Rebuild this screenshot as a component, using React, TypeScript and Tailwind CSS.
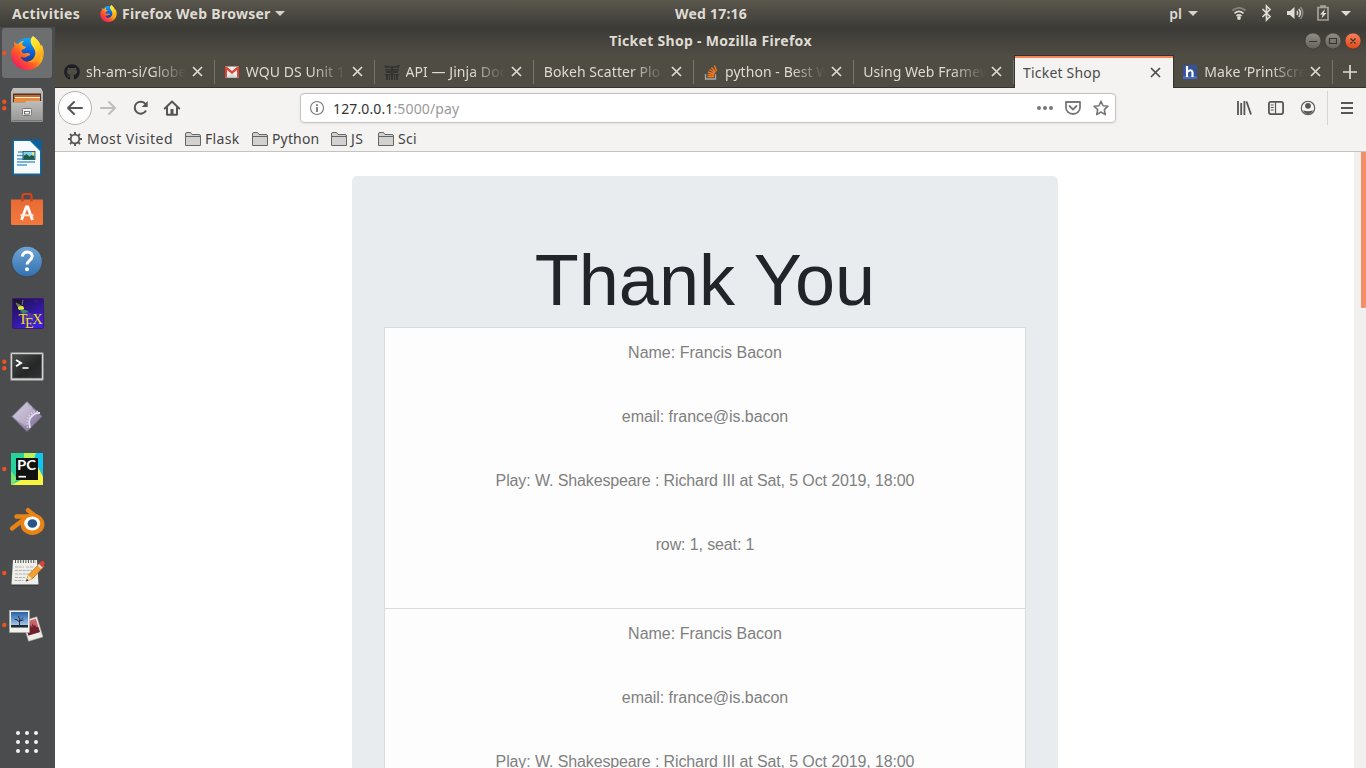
import type { ReactNode } from "react";
import { FaGithub } from "react-icons/fa";

const ui = "font-['Noto_Sans','Open_Sans',sans-serif]";

function FirefoxMark({ id }: { id: string }) {
  return (
    <g>
      <defs>
        <linearGradient id={id + "a"} x1="1" y1="0" x2="0.1" y2="0.9">
          <stop offset="0.1" stopColor="#fff24a" />
          <stop offset="0.4" stopColor="#ffb31a" />
          <stop offset="0.65" stopColor="#ff5a26" />
          <stop offset="1" stopColor="#f01468" />
        </linearGradient>
        <linearGradient id={id + "b"} x1="0.5" y1="0" x2="0.4" y2="1">
          <stop offset="0" stopColor="#11a9f5" />
          <stop offset="0.5" stopColor="#0b5fd8" />
          <stop offset="1" stopColor="#2b2a7f" />
        </linearGradient>
        <linearGradient id={id + "c"} x1="0.3" y1="0" x2="0.6" y2="1">
          <stop offset="0" stopColor="#fff44f" />
          <stop offset="0.5" stopColor="#ffd21f" />
          <stop offset="1" stopColor="#ff8a16" />
        </linearGradient>
      </defs>
      <circle cx="16.5" cy="15.5" r="13.5" fill={"url(#" + id + "b)"} />
      <path
        d="M3.6 5.3c-.2 2 0 3.5.5 4.6C1.200 12.500 0 16 .7 20.500 2 28.500 8.500 34 17 34c9 0 15.800-6.500 16-15.500.1-4-1-7.500-3-10 .6 3 .3 5.500-.5 7.500-2 6.500-6 10-11.500 9.800-4 0-7-2.200-7.700-5 2.500 1.400 5 .6 6.500-.6 1.200-.9 2.500-.5 2.800-1.200.4-.8-1-2.300-3.300-1.900-1.700.4-3.200.9-4.600-.6-.8-.9-.7-2 0-2.700 1.800-.8 3.800-1.600 3.700-3.100-1.400-.4-3-.8-3.700-1.700-.3-1.500.6-3 2-4.200-3 .3-4.800 1.500-6 3.200-1.600-.2-3.200-.8-4.100-2.700z"
        fill={"url(#" + id + "a)"}
      />
      <path
        d="M22.500 0c-2.500 2.300-3 5-1.700 8 1.600 3.400 4.300 5.200 4 9.500-.3 4.300-3.300 7.600-7.800 8.200 6.500 1.700 12-1 14-7.500.8 2.200.7 4.800-.2 7.200 2.600-4.800 3.200-12 .4-17-.3 1-.5 1.600-.8 2-1-4.400-4-7.700-7.900-10.400z"
        fill={"url(#" + id + "c)"}
      />
    </g>
  );
}

const dockItems: { name: string; dots: number; art: ReactNode }[] = [
  {
    name: "Firefox",
    dots: 1,
    art: (
      <>
        <rect x="2" y="1" width="50" height="50" rx="3" fill="#6d6e70" />
        <g transform="translate(10.500 9)">
          <FirefoxMark id="ffdock" />
        </g>
      </>
    ),
  },
  {
    name: "Files",
    dots: 2,
    art: (
      <>
        <path d="M13 9h28l2 4v28.500a1.500 1.500 0 0 1-1.500 1.500h-29a1.500 1.500 0 0 1-1.500-1.500V13z" fill="url(#fileTop)" />
        <rect x="13" y="14.500" width="28" height="9" fill="#4c342a" />
        <rect x="14" y="16" width="26" height="3" fill="#c96a2c" />
        <rect x="15" y="18" width="25" height="1.500" fill="#fff0cf" />
        <rect x="14" y="19.500" width="26" height="4" fill="#ef8a38" />
        <path d="M12 23.500h13l1.500-1.500H42v20H12z" fill="url(#fileFront)" />
        <path d="M12 41.500h30" stroke="#777" />
        <rect x="22.500" y="29.500" width="9" height="7" rx="1" fill="#eee" stroke="#777" />
        <rect x="24.500" y="32.500" width="5" height="2.500" fill="#fff" stroke="#555" strokeWidth=".8" />
      </>
    ),
  },
  {
    name: "Writer",
    dots: 0,
    art: (
      <>
        <path d="M12.500 8.500h20l9 9.500v26h-29z" fill="#0d69a5" />
        <path d="M14 10h16l10 10v22.500H14z" fill="#f7f9fa" />
        <path d="M31 8.500h10.500V19z" fill="#0f5f9b" />
        <path d="M18 21h5M17 24.500h6M17 28h18M17 31h18M17 34h10" stroke="#4b9ed0" strokeWidth="1.700" />
        <rect x="23" y="20.500" width="12" height="8" fill="#7fd0f0" stroke="#18486b" strokeWidth=".8" />
        <path d="M23.500 28v-3l3-2 3 2.500 2-1.500 3 1.500V28z" fill="#205e38" />
        <circle cx="33" cy="22.500" r="1.200" fill="#ffe64d" />
      </>
    ),
  },
  {
    name: "Software",
    dots: 0,
    art: (
      <>
        <path d="M22.500 19v-6q0-2 2-2h5q2 0 2 2v6" fill="none" stroke="#d8451d" strokeWidth="2" />
        <path d="M11 16.500h32v24a1.500 1.500 0 0 1-1.500 1.500h-29a1.500 1.500 0 0 1-1.500-1.500z" fill="url(#bag)" />
        <path d="M22.500 14v4.500M31.500 14v4.500" stroke="#c9401b" strokeWidth="2.200" />
        <path d="M21.500 37 26.300 24h1.400l4.800 13" fill="none" stroke="#fff" strokeWidth="2.800" />
        <path d="M20.500 32.300h13" stroke="#fbe6dc" strokeWidth="2" />
      </>
    ),
  },
  {
    name: "Help",
    dots: 0,
    art: (
      <>
        <circle cx="27" cy="27.300" r="15.200" fill="#36475a" opacity=".5" />
        <circle cx="27" cy="26.500" r="14.800" fill="url(#help)" />
        <path d="M22.300 21.500c.5-3.200 2.500-4.500 5-4.500 3 0 4.900 1.800 4.900 4.300 0 3.700-4.900 4.200-5.200 8.200" fill="none" stroke="#fff" strokeWidth="3" />
        <circle cx="27" cy="34.200" r="2" fill="#fff" />
      </>
    ),
  },
  {
    name: "TeX",
    dots: 0,
    art: (
      <>
        <rect x="12.500" y="11.500" width="31" height="30" rx="1" fill="url(#tex)" stroke="#43136f" />
        <path d="M14 12l9 3-2 7-6-3z" fill="#1b1b22" />
        <path d="m19 19 17 11-13 6z" fill="#6f5ab8" opacity=".45" />
        <path d="m16 16 7 4-3 3zM22 18l1-5" fill="#70747a" stroke="#777" />
        <ellipse cx="21" cy="21" rx="3" ry="2" fill="#e7e930" />
        <path d="m20 22 9 2-6 3z" fill="#38b04a" opacity=".7" />
        <path d="M34 14h4" stroke="#34327c" />
        <text x="18.500" y="36.800" fontFamily="Liberation Serif, serif" fontSize="14.500" fill="#f2dc14">T</text>
        <text x="25" y="40.600" fontFamily="Liberation Serif, serif" fontSize="14" fill="#f2dc14">E</text>
        <text x="32.200" y="36.800" fontFamily="Liberation Serif, serif" fontSize="14.500" fill="#f2dc14">X</text>
      </>
    ),
  },
  {
    name: "Terminal",
    dots: 2,
    art: (
      <>
        <rect x="10.500" y="13.500" width="33" height="28" rx="1.500" fill="#d4d5d1" stroke="#85868a" />
        <rect x="12.500" y="15.500" width="29" height="23.500" fill="url(#term)" stroke="#555" strokeWidth=".8" />
        <path d="m16 21 5 3-5 3.200" fill="none" stroke="#fff" strokeWidth="1.900" />
        <path d="M22.500 29h6" stroke="#fff" strokeWidth="1.600" />
      </>
    ),
  },
  {
    name: "Software properties",
    dots: 0,
    art: (
      <>
        <path d="M27 10.500 42 25.500 27 40.500 12 25.500z" fill="url(#diamond)" stroke="#7b718f" strokeWidth=".8" />
        <path d="m27 11.500 1.500 4 3-1 .5 3.500 3 1-1.500 3-3 1.500-1 4-3 1.500 1 3-2 3L13 25.500z" fill="#d6d0e0" opacity=".45" />
        <path d="M40 22c-5-.5-10 3-11 9l1 6" fill="none" stroke="#e6e0ee" strokeWidth="1.800" />
        <path d="M38 20.500c-6 0-10.500 4-11 10.500l.5 6" fill="none" stroke="#d8d0e2" strokeWidth="1.500" strokeDasharray="1.500 1.500" />
      </>
    ),
  },
  {
    name: "PyCharm",
    dots: 1,
    art: (
      <>
        <rect x="11" y="10" width="32" height="32" fill="#27d39a" />
        <path d="M34 10h9v22l-10-10z" fill="#10c5ee" />
        <path d="M24 10h12l-3 9-9-2z" fill="#b7f25c" />
        <path d="m38 24 5 10v8H11l12-6z" fill="#f7f442" />
        <path d="M11 28l6 8-4 6h-2z" fill="#78e673" />
        <rect x="16" y="15" width="22" height="22" fill="#111" />
        <text x="17" y="27.200" fontFamily="Lato, sans-serif" fontWeight="700" fontSize="13.500" textLength="19" lengthAdjust="spacingAndGlyphs" fill="#fff">PC</text>
        <path d="M18.500 33.700H26" stroke="#fff" strokeWidth="1.700" />
      </>
    ),
  },
  {
    name: "Blender",
    dots: 0,
    art: (
      <>
        <g stroke="#e98314" strokeWidth="4.400" strokeLinecap="round" fill="none">
          <path d="M12 33.500 27 22" />
          <path d="M16.500 21.500H31" />
          <path d="m28 15.200 11 8.800" />
        </g>
        <ellipse cx="32.500" cy="29.200" rx="12" ry="10.700" fill="#e98314" />
        <ellipse cx="32.200" cy="28.500" rx="8" ry="7" fill="#fff" />
        <ellipse cx="32.400" cy="28.500" rx="4.800" ry="4.300" fill="#265787" />
      </>
    ),
  },
  {
    name: "Text editor",
    dots: 1,
    art: (
      <>
        <path d="M13 14h24l2 25H11.500z" fill="#292a2b" opacity=".5" />
        <path d="M13 13h24l1.500 24.500h-27z" fill="#eeeeea" />
        <path d="M15 14.500h21" stroke="#555" strokeWidth="3" strokeDasharray="1 1.600" />
        <path d="M15 20h9m2 0h8M15 23.500h17M15 27h14M15 30.500h10M14.500 33.500h9" stroke="#aaa" strokeWidth=".9" strokeDasharray="3 .8" />
        <path d="m26 34 2.500-6L40 16l4 3.500L32 32z" fill="#f5a12e" stroke="#a95e17" strokeWidth=".7" />
        <path d="m28.500 28 3.500 4-6 2.500z" fill="#f5ddb4" />
        <path d="m26 34.500 1-2.500 1.500 1.600z" fill="#222" />
        <path d="m38.500 17.500 2.500-3q1.500-1.500 3 .2 1.800 1.600.3 3l-2.500 3z" fill="#df4039" />
        <path d="m37.500 18.500 1.500-1.500 3.500 3.500-1.500 1.500z" fill="#ddd" />
      </>
    ),
  },
  {
    name: "Photos",
    dots: 1,
    art: (
      <>
        <g transform="rotate(-17 33 31)">
          <rect x="25.500" y="19.500" width="15" height="21" fill="#ecece9" stroke="#aaa" strokeWidth=".5" />
          <rect x="27" y="21" width="12" height="14" fill="#c8636b" />
          <path d="M27 35v-6l1-2 1 2 1-4 1 3 1-3 1 4 1-5 1 4 1-2 1 3 2 1v5z" fill="#70202c" />
        </g>
        <rect x="9.500" y="11.500" width="20" height="22" fill="#f1f1ed" stroke="#aaa" strokeWidth=".6" />
        <rect x="11" y="13" width="17" height="15.500" fill="url(#sky)" />
        <path d="M11 28.500V26h17v2.500z" fill="#202735" />
        <path d="M19.500 27V20m0 3-3.500-3m3.500 2 3.500-3.500M19.500 20l-1-3m1 5 4-1M16.500 21l-2-1" stroke="#202735" strokeWidth=".9" fill="none" />
      </>
    ),
  },
];

function Dock() {
  return (
    <aside className="flex h-[741px] w-[55px] shrink-0 flex-col bg-[#4b4c4d]">
      <svg className="h-0 w-0" aria-hidden="true">
        <defs>
          <linearGradient id="fileTop" x2="0" y2="1"><stop stopColor="#c2c2c0" /><stop offset="1" stopColor="#8e8e8c" /></linearGradient>
          <linearGradient id="fileFront" x2="0" y2="1"><stop stopColor="#bdbdbb" /><stop offset="1" stopColor="#989896" /></linearGradient>
          <linearGradient id="bag" x2="0" y2="1"><stop stopColor="#e86a35" /><stop offset="1" stopColor="#f4793b" /></linearGradient>
          <linearGradient id="help" x2="0" y2="1"><stop stopColor="#6ea5d5" /><stop offset="1" stopColor="#3472b0" /></linearGradient>
          <linearGradient id="tex" x2="0.6" y2="1"><stop stopColor="#17124b" /><stop offset="0.5" stopColor="#2d1689" /><stop offset="1" stopColor="#3a24e0" /></linearGradient>
          <linearGradient id="term" x2="1" y2="1"><stop stopColor="#4a4b4b" /><stop offset="0.6" stopColor="#252626" /><stop offset="1" stopColor="#333" /></linearGradient>
          <linearGradient id="diamond" x2="1" y2="1"><stop stopColor="#d9d3e3" /><stop offset="0.5" stopColor="#a497b9" /><stop offset="1" stopColor="#78668f" /></linearGradient>
          <linearGradient id="sky" x2="0" y2="1"><stop stopColor="#275fa8" /><stop offset="1" stopColor="#b9d9f2" /></linearGradient>
        </defs>
      </svg>
      {dockItems.map((item) => (
        <svg key={item.name} className="h-[52px] w-[55px] shrink-0" viewBox="0 0 55 52">
          {item.art}
          {item.dots === 1 && <circle cx="4.300" cy="26" r="2.200" fill="#e95420" />}
          {item.dots === 2 && (
            <>
              <circle cx="4.300" cy="22.700" r="2.200" fill="#e95420" />
              <circle cx="4.300" cy="29.300" r="2.200" fill="#e95420" />
            </>
          )}
        </svg>
      ))}
      <div className="mt-auto mr-px grid grid-cols-3 gap-[5px] self-center pb-[15px]">
        {Array.from({ length: 9 }, (_, i) => (
          <span key={i} className="size-1 rounded-full bg-[#f4f4f2]" />
        ))}
      </div>
    </aside>
  );
}

function Caret() {
  return (
    <svg className="h-[5px] w-[10px]" viewBox="0 0 10 5">
      <path d="M0 0h10L5 5z" fill="#d5d3cd" />
    </svg>
  );
}

function TopBar() {
  return (
    <header className={`${ui} flex h-[27px] items-center bg-linear-to-b from-[#5a574d] to-[#3d3c37] pb-px text-[14px] font-bold text-[#dfdbd2]`}>
      <div className="flex w-[600px] items-center pl-3">
        <span className="w-[88px] tracking-[0.3px]">Activities</span>
        <svg className="h-[17px] w-[17px]" viewBox="0 0 34 34">
          <FirefoxMark id="ffbar" />
        </svg>
        <span className="mr-[4px] ml-[5px] tracking-[0.28px]">Firefox Web Browser</span>
        <Caret />
      </div>
      <span className="w-[222px] text-center tracking-[0.2px]">Wed 17:16</span>
      <div className="flex flex-1 items-center justify-end pr-[8px]">
        <span className="mr-[6px] font-semibold">pl</span>
        <Caret />
        <svg className="ml-[32px] h-[20px] w-[128px]" viewBox="1230 3 128 20">
          <g fill="none" stroke="#dfdbd2" strokeWidth="1.700">
            <path d="M1232.500 10.500q6.500-5.400 13 0" opacity=".4" />
            <path d="M1234.500 13.300q4.500-3.700 9 0" />
            <path d="M1236.500 16q2.500-2.200 5 0" />
            <path d="m1262.500 9 7.500 7.500-3.500 3.500V6l3.500 3.500-7.500 7.500" />
            <path d="M1297 11q1.500 2 0 4M1298.800 9q3.200 4 0 8" strokeWidth="1.500" />
            <path d="M1300.500 7q4.500 6 0 12" opacity=".4" />
            <path d="M1318 7.500h10v12.500h-10zM1321 7V6h4v1" opacity=".6" />
          </g>
          <g fill="#dfdbd2">
            <circle cx="1239" cy="18" r="1.900" />
            <path d="M1287 11h3l4.500-4v12l-4.500-4h-3z" />
            <path d="m1325 9-5 5.500h2.500l-1 4 5-5.500h-2.600z" />
            <path d="M1341 11h10l-5 5z" />
          </g>
        </svg>
      </div>
    </header>
  );
}

const tabs: { title: string; icon?: ReactNode; active?: boolean }[] = [
  { title: "sh-am-si/Globe", icon: <FaGithub className="size-4 text-[#1b1f23]" /> },
  {
    title: "WQU DS Unit 1",
    icon: (
      <svg className="size-4" viewBox="0 0 16 16">
        <path d="M1 2.500h14v11H1z" fill="#eee" />
        <path d="m3 13.500 5-4.500 5 4.500" fill="#d8d8d8" />
        <path d="M1 13.500v-11h1.500L8 7l5.500-4.500H15v11h-2V6L8 10 3 6v7.500z" fill="#dc4436" />
      </svg>
    ),
  },
  {
    title: "API — Jinja Doc",
    icon: (
      <svg className="size-4" viewBox="0 0 16 16">
        <path d="M0 1.500q8 2 16-.8l-1 3H1zM1 5h14v1.500H1zM2 7h12v2H2zM1 10h14v1H1zM2 11h2.200v5H2zM5 10h1v6H5zM7 4h2v12H7zM10 10h1v6h-1zM12 11h2v5h-2z" fill="#34332f" />
      </svg>
    ),
  },
  { title: "Bokeh Scatter Plo" },
  {
    title: "python - Best W",
    icon: (
      <svg className="size-4" viewBox="0 0 16 16" fill="none">
        <path d="M2.500 10v5h10v-5" stroke="#a8a9a8" strokeWidth="1.300" />
        <path d="M4.500 12.800h6.500M4.500 10.500l6.500.8M5 8l6.300 2M6.500 5.500l5.400 3.500M8.500 3.500l4 5M11.500 1.500l2 5.800" stroke="#f4771c" strokeWidth="1.400" />
      </svg>
    ),
  },
  { title: "Using Web Framew" },
  { title: "Ticket Shop", active: true },
  {
    title: "Make ‘PrintScre",
    icon: (
      <svg className="size-4" viewBox="0 0 16 16">
        <path d="M1 1h14v14H1z" fill="#345199" />
        <path d="M1 12h14v3H1z" fill="#456bc4" />
        <path d="M5 2v11M5 8q4.500-3.500 5.500 0v5" fill="none" stroke="#fff" strokeWidth="2.200" />
      </svg>
    ),
  },
];

function Tabs() {
  return (
    <div className="flex h-8 bg-[#4f4c44]">
      {tabs.map((tab) => (
        <div
          key={tab.title}
          className={
            tab.active
              ? "-mt-px -mr-px flex h-[33px] w-[160.8px] shrink-0 items-center border-x border-t border-[#33322e] bg-[#f4f3f2] text-[#4c4c4c]"
              : "flex w-[159.75px] shrink-0 items-center border-b border-[#33322e] text-[#dfdbd2]"
          }
        >
          <div
            className={
              tab.active
                ? "flex h-full flex-1 items-center border-t-2 border-[#f58558] pl-[8.500px]"
                : "flex h-6 flex-1 items-center border-r border-[#77746c] pl-[9.500px]"
            }
          >
            {tab.icon && <span className="mr-[6px] -ml-[0.500px] shrink-0">{tab.icon}</span>}
            <span
              className={
                tab.active
                  ? "w-0 flex-1 overflow-hidden pb-[2px] text-[14px] tracking-[0.2px] whitespace-nowrap"
                  : "w-0 flex-1 overflow-hidden mask-r-from-[calc(100%-34px)] mask-r-to-100% text-[14px] tracking-[0.06px] whitespace-nowrap"
              }
            >
              {tab.title}
            </span>
            <svg className={tab.active ? "mr-[12px] mb-[2px] ml-[6px] size-[11px]" : "mr-[11px] ml-[6px] size-[11px]"} viewBox="0 0 11 11">
              <path d="m1 1 9 9m0-9-9 9" stroke="currentColor" strokeWidth="1.700" />
            </svg>
          </div>
        </div>
      ))}
      <div className="flex flex-1 items-center justify-center border-b border-[#33322e]">
        <svg className="size-[14px]" viewBox="0 0 14 14">
          <path d="M7 0v14M0 7h14" stroke="#dfdbd2" strokeWidth="1.700" />
        </svg>
      </div>
    </div>
  );
}

function TitleBar() {
  return (
    <div className="flex h-[29px] items-center bg-linear-to-b from-[#3b3a35] to-[#4f4c44]">
      <span className="w-[252px]" />
      <span className={`${ui} flex-1 pb-[2px] text-center text-[14px] font-bold tracking-[0.3px] text-[#dfdbd2]`}>Ticket Shop - Mozilla Firefox</span>
      <svg className="mb-px ml-[189px] h-[18px] w-[63px]" viewBox="1303 32 63 18">
        <defs>
          <linearGradient id="btn" x2="0" y2="1"><stop stopColor="#908e86" /><stop offset="1" stopColor="#64625b" /></linearGradient>
          <linearGradient id="btnClose" x2="0" y2="1"><stop stopColor="#f58260" /><stop offset="1" stopColor="#df4815" /></linearGradient>
        </defs>
        <circle cx="1313" cy="41" r="8" fill="url(#btn)" stroke="#35342f" strokeWidth=".6" />
        <circle cx="1333" cy="41" r="8" fill="url(#btn)" stroke="#35342f" strokeWidth=".6" />
        <circle cx="1353" cy="41" r="8" fill="url(#btnClose)" stroke="#35342f" strokeWidth=".6" />
        <path d="M1309 41.500h8M1329.500 38.500h7v5h-7zM1350.500 38.500l5 5m0-5-5 5" fill="none" stroke="#373630" strokeWidth="1.200" />
      </svg>
    </div>
  );
}

function NavBar() {
  return (
    <div className="flex h-10 items-center">
      <svg className="h-10 w-[245px] shrink-0" viewBox="55 88 245 40" fill="none">
        <circle cx="75" cy="108" r="16.500" fill="#fdfdfd" stroke="#b3b2b0" />
        <path d="M82 108H68M74 102l-6 6 6 6" stroke="#565655" strokeWidth="2" strokeLinecap="round" strokeLinejoin="round" />
        <path d="M101 108h14M109 102l6 6-6 6" stroke="#bdbdbc" strokeWidth="2" strokeLinecap="round" strokeLinejoin="round" />
        <path d="M145.500 104a6 6 0 1 0 .5 6.500" stroke="#565655" strokeWidth="2" />
        <path d="M147.700 101v6h-6z" fill="#565655" />
        <path d="m164.800 108.500 7.200-7 7.200 7M167 107.500v7.300h10v-7.300" stroke="#565655" strokeWidth="2" strokeLinecap="round" strokeLinejoin="round" />
        <path d="M170.500 115v-6h3v6z" fill="#565655" />
      </svg>
      <div className="flex h-[30px] w-[816px] shrink-0 items-center rounded-[4px] border border-[#c4c3c1] bg-white shadow-[0_1px_3px_rgba(0,0,0,0.06)]">
        <svg className="ml-2 size-4" viewBox="0 0 16 16">
          <circle cx="8" cy="8" r="6.500" fill="none" stroke="#777" strokeWidth="1.100" />
          <path d="M7.100 7h1.800v5H7.100zM7.100 4.200h1.800V6H7.100z" fill="#777" />
        </svg>
        <span className={`${ui} ml-2 flex-1 text-[14px] tracking-[0.13px] text-[#9a9a9a]`}>
          <span className="text-[#333]">127.0.0.1</span>:5000/pay
        </span>
        <svg className="h-[20px] w-[80px]" viewBox="1035 98 80 20" fill="none" stroke="#777" strokeWidth="1.800">
          <g fill="#777" stroke="none">
            <circle cx="1039" cy="108" r="2" />
            <circle cx="1045" cy="108" r="2" />
            <circle cx="1051" cy="108" r="2" />
          </g>
          <path d="M1066 102h14v5.500a7 6.500 0 0 1-14 0zM1069.500 106l3.500 3.500 3.500-3.500" strokeLinejoin="round" strokeLinecap="round" />
          <path d="m1101 101.200 2 4.500 5 .5-3.700 3.400 1 5-4.300-2.600-4.300 2.600 1-5-3.700-3.400 5-.5z" strokeLinejoin="round" strokeWidth="1.600" />
        </svg>
      </div>
      <svg className="ml-auto h-10 w-[136px]" viewBox="1230 88 136 40" fill="none" stroke="#565655" strokeWidth="1.800">
        <path d="M1238 101v14M1241.200 103v12M1244.400 101v14M1246.500 101.500l4.500 13" />
        <rect x="1268.900" y="101.900" width="14.200" height="12.200" rx="2" />
        <path d="M1275.500 102v12" strokeWidth="1.200" />
        <path d="M1270.700 105h3m-3 2.500h3m-3 2.500h3" strokeWidth="1" />
        <circle cx="1308" cy="108" r="6.700" strokeWidth="1.100" />
        <circle cx="1308" cy="105.800" r="2.900" fill="#565655" stroke="none" />
        <path d="M1303 110.200q5 2 10 0-1.500 3.800-5 3.800t-5-3.800z" fill="#565655" stroke="none" />
        <path d="M1327.500 91v34" stroke="#d6d5d3" strokeWidth="1" />
        <path d="M1341 103h12m-12 5h12m-12 5h12" />
      </svg>
    </div>
  );
}

const folders: { name: string; cls: string }[] = [
  { name: "Flask", cls: "w-[47px] tracking-[0.3px]" },
  { name: "Python", cls: "w-[59px] tracking-[0.15px]" },
  { name: "JS", cls: "w-[27px] tracking-[0.4px]" },
  { name: "Sci", cls: "w-[30px] tracking-[0.3px]" },
];

function Bookmarks() {
  return (
    <div className={`${ui} flex h-6 items-center border-b border-[#c4c3c1] pb-[2px] pl-3 text-[14px] text-[#444]`}>
      <svg className="size-4 shrink-0" viewBox="0 0 16 16" fill="none" stroke="#565655">
        <circle cx="8" cy="8" r="4.300" strokeWidth="1.800" />
        <path d="M8 1v2.500m0 9V15M1 8h2.500m9 0H15M3 3l1.800 1.800m6.400 6.400L13 13M3 13l1.800-1.800m6.400-6.400L13 3" strokeWidth="1.900" />
      </svg>
      <span className="ml-1 w-[98px] shrink-0 tracking-[0.46px]">Most Visited</span>
      {folders.map((f) => (
        <div key={f.name} className="flex items-center">
          <svg className="mr-[4px] h-[14px] w-4 shrink-0" viewBox="0 0 16 14">
            <path d="M.5 13V2q0-1.500 1.500-1.500h3.500l1.500 2h7q1.500 0 1.500 1.500v9.500H.5z" fill="#d2d1cf" stroke="#666" />
            <path d="M1 4.500h14" stroke="#666" />
          </svg>
          <span className={`${f.cls} shrink-0 whitespace-nowrap`}>{f.name}</span>
        </div>
      ))}
    </div>
  );
}

function Ticket() {
  return (
    <li className="flex h-[281px] flex-col gap-10 border border-b-0 border-[#d9dadb] bg-[#fdfdfd] pt-[13px] text-center text-base leading-6 text-[#808080]">
      <p>Name: Francis Bacon</p>
      <p className="tracking-[-0.05px]">email: france@is.bacon</p>
      <p className="tracking-[-0.12px]">Play: W. Shakespeare : Richard III at Sat, 5 Oct 2019, 18:00</p>
      <p className="tracking-[-0.12px]">row: 1, seat: 1</p>
    </li>
  );
}

export default function App() {
  return (
    <div className="h-[768px] w-[1366px] overflow-hidden bg-white">
      <TopBar />
      <div className="flex">
        <Dock />
        <main className="flex h-[741px] flex-1 flex-col">
          <TitleBar />
          <Tabs />
          <div className="shrink-0 bg-[#f4f3f2]">
            <NavBar />
            <Bookmarks />
          </div>
          <div className="flex min-h-0 flex-1">
            <div className="flex-1 overflow-hidden pt-6 pl-[297px] font-['Liberation_Sans',sans-serif]">
              <section className="h-[700px] w-[706px] rounded-[5px] bg-[#e8ecef] px-8 pt-[61px]">
                <h1 className="mb-[3px] h-[87px] text-center text-[72px] leading-[86px] font-light text-[#212529]">Thank You</h1>
                <ul>
                  <Ticket />
                  <Ticket />
                </ul>
              </section>
            </div>
            <div className="flex w-3 justify-end bg-[#f1f0ef]">
              <span className="h-[156px] w-[5px] rounded-b-[1px] bg-[#f28e68]" />
            </div>
          </div>
        </main>
      </div>
    </div>
  );
}
